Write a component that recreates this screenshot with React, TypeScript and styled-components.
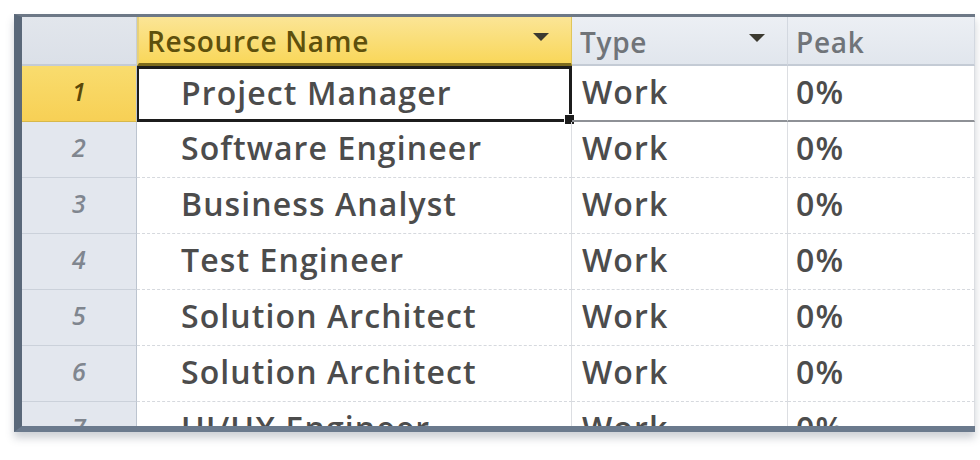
import * as React from 'react'
import styled, { createGlobalStyle, css } from 'styled-components'

const GlobalStyle = createGlobalStyle`
  html, body {
    margin: 0;
    padding: 0;
    background: #ffffff;
  }
  body {
    font-family: 'Open Sans', 'Liberation Sans', sans-serif;
  }
`

const Page = styled.div`
  width: 980px;
  height: 460px;
  padding: 14px 5px 0 14px;
  box-sizing: border-box;
  overflow: hidden;
`

const Sheet = styled.div`
  height: 418px;
  box-sizing: border-box;
  border-left: 8px solid #5a6879;
  border-top: 3px solid #6d7886;
  border-bottom: 6px solid #6b7a8d;
  box-shadow: 0 6px 8px rgba(60, 70, 90, 0.25);
  overflow: hidden;
  background: #ffffff;
`

const Row = styled.div<{ $header?: boolean }>`
  display: grid;
  grid-template-columns: 115px 435px 216px 1fr;
  height: ${(p) => (p.$header ? '49px' : '56px')};
`

const Corner = styled.div`
  background: linear-gradient(#e2e6ec, #dbe0e8);
  border-right: 1px solid #c7ced8;
  border-bottom: 2px solid #c4cbd5;
`

const HeadCell = styled.div<{ $active?: boolean }>`
  display: flex;
  align-items: center;
  justify-content: space-between;
  padding: 2px 22px 0 8px;
  font-size: 28px;
  font-weight: 600;
  letter-spacing: 0.7px;
  color: #707479;
  background: linear-gradient(#eceff4, #e1e6ed);
  border-right: 1px solid #d3d8e0;
  border-bottom: 2px solid #c4cbd5;
  ${(p) =>
    p.$active &&
    css`
      color: #5e500c;
      background: linear-gradient(#fbe596, #f9d75a);
      border-right: 1px solid #e0c65a;
      border-bottom: 3px solid #7d6b1d;
      border-left: 2px solid #e6d07a;
    `}
`

const Caret = styled.span`
  width: 0;
  height: 0;
  border-left: 8px solid transparent;
  border-right: 8px solid transparent;
  border-top: 8px solid #3c3a30;
  margin-top: -8px;
`

const RowNum = styled.div<{ $active?: boolean }>`
  display: flex;
  align-items: center;
  justify-content: center;
  padding-bottom: 6px;
  font-size: 25px;
  font-weight: 600;
  font-style: italic;
  color: ${(p) => (p.$active ? '#5a4808' : '#80868f')};
  background: ${(p) => (p.$active ? 'linear-gradient(#f9dc6e, #f7d055)' : '#e3e7ee')};
  border-right: 1px solid #bcc4cf;
  border-bottom: 1px solid ${(p) => (p.$active ? '#d7b84a' : '#cbd1da')};
`

const Cell = styled.div<{ $indent?: number; $strong?: boolean }>`
  position: relative;
  display: flex;
  align-items: center;
  padding: 0 0 4px ${(p) => p.$indent ?? 10}px;
  font-size: 32px;
  font-weight: 600;
  letter-spacing: 1.1px;
  color: #4c4c4c;
  white-space: nowrap;
  border-right: 1px solid #dcdee2;
  border-bottom: ${(p) => (p.$strong ? '2px solid #8e9196' : '1px dashed #d6d9de')};
`

const Selected = styled(Cell)`
  border: 3px solid #1c1c1c;
  border-left-width: 2px;
  padding-left: 42px;
`

const Handle = styled.span`
  position: absolute;
  right: -6px;
  bottom: -6px;
  width: 9px;
  height: 9px;
  background: #1c1c1c;
  border: 1px solid #ffffff;
`

const resources = [
  'Project Manager',
  'Software Engineer',
  'Business Analyst',
  'Test Engineer',
  'Solution Architect',
  'Solution Architect',
  'UI/UX Engineer',
]

export default function App() {
  return (
    <Page>
      <GlobalStyle />
      <Sheet>
        <Row $header>
          <Corner />
          <HeadCell $active>
            Resource Name <Caret />
          </HeadCell>
          <HeadCell>
            Type <Caret />
          </HeadCell>
          <HeadCell>Peak</HeadCell>
        </Row>
        {resources.map((name, i) => (
          <Row key={i}>
            <RowNum $active={i === 0}>{i + 1}</RowNum>
            {i === 0 ? (
              <Selected>
                {name}
                <Handle />
              </Selected>
            ) : (
              <Cell $indent={44}>{name}</Cell>
            )}
            <Cell $strong={i === 0}>Work</Cell>
            <Cell $strong={i === 0} $indent={8}>
              0%
            </Cell>
          </Row>
        ))}
      </Sheet>
    </Page>
  )
}
